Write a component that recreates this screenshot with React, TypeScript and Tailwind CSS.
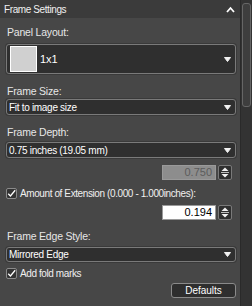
import type { ReactNode } from "react";

const font = { fontFamily: '"Liberation Sans", Arial, sans-serif' };

function Caret() {
  return (
    <svg width="9" height="7" viewBox="0 0 9 7" className="shrink-0">
      <path d="M1.5 1.5 H7.5 L4.5 5.5 Z" fill="#f2f2f2" stroke="#f2f2f2" strokeWidth="1" strokeLinejoin="round" />
    </svg>
  );
}

function Select({ children, className = "" }: { children: ReactNode; className?: string }) {
  return (
    <div
      className={`mx-[6px] flex w-[230px] items-center justify-between rounded-[3px] border border-[#7a7a7a] bg-[#2f2f2f] pl-[2px] pr-[3px] text-[10px] tracking-[-0.3px] text-white shadow-[0_0_0_1px_#3a3a3a] ${className}`}
    >
      {children}
      <Caret />
    </div>
  );
}

function Label({ children, className = "" }: { children: ReactNode; className?: string }) {
  return (
    <div className={`h-[14px] px-[7px] text-[10.5px] leading-[14px] tracking-[-0.2px] text-[#e6e6e6] ${className}`}>
      {children}
    </div>
  );
}

function Spinner() {
  return (
    <div className="flex h-[15px] w-[14px] flex-col items-center justify-center rounded-[2px] border border-[#7a7a7a] bg-[#2f2f2f]">
      <svg width="10" height="13" viewBox="0 0 10 13">
        <path d="M5 1.5 L8.5 5 H1.5 Z" fill="#f2f2f2" />
        <line x1="1" y1="6.5" x2="9" y2="6.5" stroke="#bdbdbd" strokeWidth="1" />
        <path d="M5 11.5 L8.5 8 H1.5 Z" fill="#f2f2f2" />
      </svg>
    </div>
  );
}

function NumberBox({ value, disabled, className = "" }: { value: string; disabled?: boolean; className?: string }) {
  return (
    <div className={`flex h-[15px] items-center justify-end gap-[2px] pr-[8px] ${className}`}>
      <div
        className={`flex h-[15px] w-[54px] items-center justify-end border pr-[3px] text-[11px] ${
          disabled ? "border-[#9a9a9a] bg-[#8d8d8d] text-[#5c5c5c]" : "border-[#9a9a9a] bg-white text-black"
        }`}
      >
        {value}
      </div>
      <Spinner />
    </div>
  );
}

function Check({ label, className = "" }: { label: string; className?: string }) {
  return (
    <div className={`flex h-[14px] items-center gap-[3px] px-[6px] text-[10px] tracking-[-0.4px] text-[#f0f0f0] ${className}`}>
      <div className="flex h-[11px] w-[11px] items-center justify-center rounded-[2px] border border-[#8a8a8a] bg-[#333]">
        <svg width="11" height="11" viewBox="0 0 11 11">
          <path d="M1.5 5.8 L4.2 8.5 L10 1.5" fill="none" stroke="#fff" strokeWidth="1.6" />
        </svg>
      </div>
      <span>{label}</span>
    </div>
  );
}

export default function App() {
  return (
    <div className="flex h-[306px] w-[252px] bg-[#474747]" style={font}>
      <div className="flex w-[240px] flex-col">
        <div className="flex h-[18px] items-center justify-between bg-[#3b3b3b] pl-[4px] pr-[5px] text-[10px] tracking-[-0.4px] text-[#f0f0f0]">
          <span>Frame Settings</span>
          <svg width="9" height="7" viewBox="0 0 9 7">
            <path d="M1 6 L4.5 2 L8 6" fill="none" stroke="#fff" strokeWidth="1.8" />
          </svg>
        </div>

        <Label className="mt-[7px]">Panel Layout:</Label>
        <Select className="mt-[5px] h-[30px] pl-[3px]">
          <div className="flex items-center gap-[3px]">
            <div className="h-[26px] w-[27px] border border-white bg-[#d0d0d0]" />
            <span className="text-[11px] tracking-normal">1x1</span>
          </div>
        </Select>

        <Label className="mt-[10px]">Frame Size:</Label>
        <Select className="mt-[1px] h-[16px]">
          <span>Fit to image size</span>
        </Select>

        <Label className="mt-[10px]">Frame Depth:</Label>
        <Select className="mt-[3px] h-[16px]">
          <span>0.75 inches (19.05 mm)</span>
        </Select>

        <NumberBox value="0.750" disabled className="mt-[7px]" />
        <Check label="Amount of Extension (0.000 - 1.000inches):" className="mt-[6px]" />
        <NumberBox value="0.194" className="mt-[5px]" />

        <Label className="mt-[9px]">Frame Edge Style:</Label>
        <Select className="mt-[4px] h-[15px]">
          <span>Mirrored Edge</span>
        </Select>

        <Check label="Add fold marks" className="mt-[4px]" />

        <div className="mt-[3px] flex justify-end pr-[4px]">
          <div className="flex h-[15px] w-[65px] items-center justify-center rounded-[3px] border border-[#8a8a8a] bg-[#2e2e2e] text-[10px] text-white">
            Defaults
          </div>
        </div>
      </div>

      <div className="flex w-[12px] flex-col border-l border-[#2a2a2a] bg-[#333] px-[1px] pt-[3px]">
        <div className="h-[104px] w-full rounded-[3px] border border-[#666] bg-[#3e3e3e]" />
      </div>
    </div>
  );
}
